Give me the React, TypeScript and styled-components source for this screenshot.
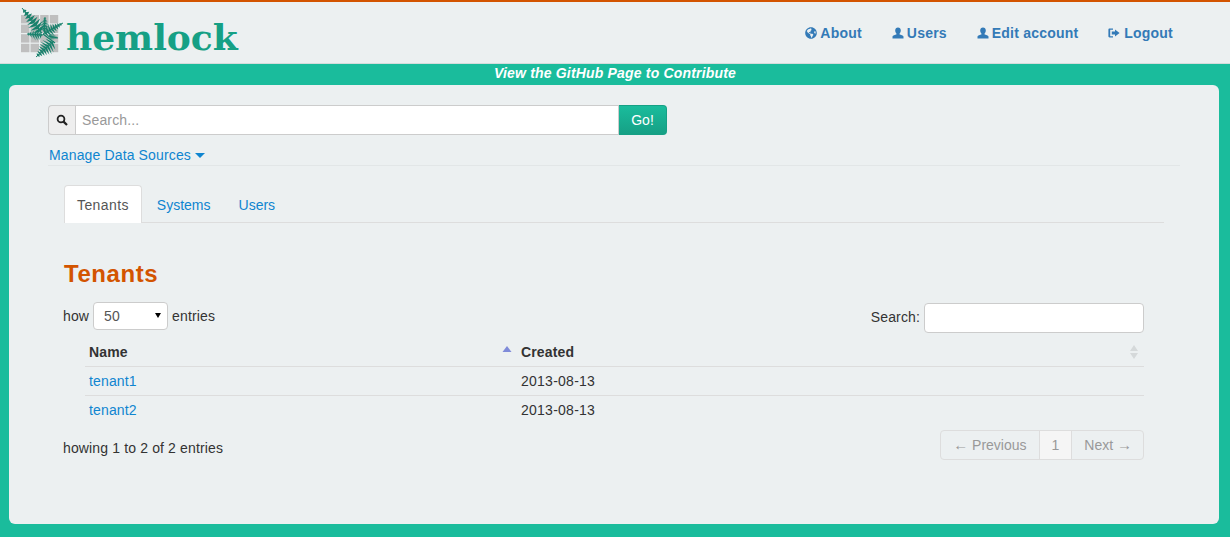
import React from "react";
import styled, { createGlobalStyle } from "styled-components";
import { FaGlobeAmericas } from "react-icons/fa";

const GlobalStyle = createGlobalStyle`
  html, body {
    margin: 0;
    padding: 0;
    background: #1abc9c;
    color: #333;
    font-family: "Liberation Sans", Arial, sans-serif;
    font-size: 14px;
    line-height: 20px;
    letter-spacing: 0.14px;
  }
  * {
    box-sizing: border-box;
  }
`;

const Page = styled.div`
  width: 1230px;
  height: 537px;
  overflow: hidden;
  display: flex;
  flex-direction: column;
`;

const Navbar = styled.header`
  height: 64px;
  flex: none;
  background: #ecf0f1;
  border-top: 2px solid #d35400;
  border-bottom: 1px solid #d4dcdc;
  display: flex;
  align-items: flex-start;
  justify-content: space-between;
  padding: 6px 57px 0 19px;
`;

const Brand = styled.a`
  display: flex;
  align-items: flex-start;
`;

const LogoText = styled.span`
  font-family: "DejaVu Serif", "Liberation Serif", serif;
  font-weight: 700;
  font-size: 36px;
  line-height: 48px;
  color: #16a085;
  margin: 5px 0 0 1px;
  letter-spacing: 0;
`;

const NavLinks = styled.nav`
  display: flex;
  gap: 30px;
  padding-top: 15px;
`;

const NavLink = styled.a`
  display: flex;
  align-items: center;
  gap: 3px;
  color: #337ab7;
  font-weight: 700;
  font-size: 14px;
  line-height: 20px;
  letter-spacing: 0.21px;
`;

const Banner = styled.div`
  height: 21px;
  flex: none;
  text-align: center;
  color: #fff;
  font-style: italic;
  font-weight: 700;
  font-size: 14px;
  line-height: 19px;
  letter-spacing: 0.18px;
`;

const Card = styled.main`
  height: 439px;
  flex: none;
  margin: 0 11px 0 9px;
  background: #ecf0f1;
  border-radius: 6px;
  padding: 20px 39px;
`;

const SearchGroup = styled.form`
  width: 619px;
  height: 30px;
  display: flex;
`;

const Addon = styled.span`
  width: 27px;
  display: flex;
  align-items: center;
  justify-content: center;
  background: #eee;
  border: 1px solid #ccc;
  border-right: 0;
  border-radius: 4px 0 0 4px;
`;

const SearchInput = styled.input`
  flex: 1;
  min-width: 0;
  border: 1px solid #ccc;
  background: #fff;
  padding: 0 6px;
  font: 14px "Liberation Sans", Arial, sans-serif;
  letter-spacing: 0.14px;
  color: #555;
  outline: 0;
  &::placeholder {
    color: #999;
    opacity: 1;
  }
`;

const GoButton = styled.button`
  width: 48px;
  border: 1px solid #16a085;
  border-left: 0;
  border-radius: 0 4px 4px 0;
  background: linear-gradient(#1abc9c, #16a085);
  color: #fff;
  padding: 0;
  font: 14px "Liberation Sans", Arial, sans-serif;
`;

const SourcesLink = styled.a`
  display: block;
  margin: 10px 0 0 1px;
  color: #0f85d0;
  font-size: 14px;
  line-height: 20px;
`;

const Caret = styled.i`
  display: inline-block;
  margin-left: 4px;
  vertical-align: 2px;
  border-top: 5px solid #0f85d0;
  border-left: 5px solid transparent;
  border-right: 5px solid transparent;
`;

const Rule = styled.hr`
  margin: 0;
  border: 0;
  border-top: 1px solid #e2e6e7;
`;

const Body = styled.section`
  padding: 19px 16px 0;
`;

const Tabs = styled.ul`
  list-style: none;
  margin: 0;
  padding: 0;
  height: 38px;
  display: flex;
  gap: 2px;
  border-bottom: 1px solid #ddd;
`;

const Tab = styled.li<{ $active?: boolean }>`
  height: 38px;
  padding: 9px 12px 0;
  border: 1px solid ${(p) => (p.$active ? "#ddd" : "transparent")};
  border-bottom: 0;
  border-radius: 4px 4px 0 0;
  background: ${(p) => (p.$active ? "#fff" : "transparent")};
  color: ${(p) => (p.$active ? "#555" : "#0f85d0")};
  letter-spacing: ${(p) => (p.$active ? "0.4px" : "0")};
`;

const Title = styled.h3`
  margin: 37px 0 0;
  color: #d35400;
  font-size: 24px;
  line-height: 28px;
  font-weight: 700;
  letter-spacing: 0.55px;
`;

const Controls = styled.div`
  display: flex;
  justify-content: space-between;
  align-items: flex-start;
  margin: 15px 20px 0 -1px;
`;

const Label = styled.label`
  display: flex;
  align-items: center;
  gap: 4px;
  height: 26px;
`;

const SelectBox = styled.span`
  position: relative;
  display: block;
  height: 28px;
  &::after {
    content: "";
    position: absolute;
    top: 11px;
    right: 7px;
    border-top: 5px solid #000;
    border-left: 3px solid transparent;
    border-right: 3px solid transparent;
  }
`;

const SizeSelect = styled.select`
  display: block;
  width: 75px;
  height: 28px;
  padding: 0 10px;
  border: 1px solid #ccc;
  border-radius: 4px;
  background: #fff;
  color: #555;
  font: 14px "Liberation Sans", Arial, sans-serif;
  appearance: none;
`;

const FilterLabel = styled(Label)`
  height: 30px;
  align-items: flex-start;
  line-height: 28px;
`;

const FilterInput = styled.input`
  width: 220px;
  height: 30px;
  border: 1px solid #ccc;
  border-radius: 4px;
  background: #fff;
`;

const Table = styled.table`
  width: 1059px;
  margin: 7px 0 0 21px;
  border-collapse: collapse;
  table-layout: fixed;
`;

const HeadCell = styled.th<{ $width?: number }>`
  width: ${(p) => (p.$width ? `${p.$width}px` : "auto")};
  height: 26px;
  padding: 0 4px 2px;
  text-align: left;
  font-weight: 700;
  border-bottom: 1px solid #ddd;
`;

const HeadInner = styled.div`
  display: flex;
  align-items: center;
  justify-content: space-between;
`;

const Cell = styled.td`
  height: 29px;
  padding: 0 4px;
  border-bottom: 1px solid #ddd;
`;

const LastCell = styled(Cell)`
  border-bottom: 0;
`;

const DateCell = styled(Cell)`
  letter-spacing: 0.25px;
`;

const LastDateCell = styled(DateCell)`
  border-bottom: 0;
`;

const TenantLink = styled.a`
  color: #0f85d0;
`;

const Footer = styled.div`
  display: flex;
  justify-content: space-between;
  align-items: flex-start;
  margin: 6px 20px 0 -1px;
`;

const Info = styled.div`
  padding-top: 8px;
`;

const Pager = styled.ul`
  list-style: none;
  margin: 0;
  padding: 0;
  height: 30px;
  display: flex;
  border: 1px solid #ddd;
  border-radius: 4px;
  color: #999;
  letter-spacing: 0;
`;

const PageItem = styled.li<{ $current?: boolean }>`
  padding: 4px 12px;
  background: ${(p) => (p.$current ? "#f5f5f5" : "transparent")};
  border-left: ${(p) => (p.$current ? "1px solid #ddd" : "0")};
  border-right: ${(p) => (p.$current ? "1px solid #ddd" : "0")};
  &:last-child {
    padding-right: 11px;
  }
`;

const Arrow = styled.span`
  font-size: 15px;
  line-height: 20px;
`;

const SortSvg = styled.svg`
  flex: none;
  margin-right: 1px;
`;

const GRID = [0, 1, 2, 3];
const STEPS = [0.06, 0.17, 0.28, 0.39, 0.5, 0.61, 0.72, 0.83];
const FERN = "#17806b";

// one pinnate leaf: stalk plus pointed leaflets that shrink towards the tip
const Frond = ({ x1, y1, x2, y2, size }: { x1: number; y1: number; x2: number; y2: number; size: number }) => {
  const dx = x2 - x1;
  const dy = y2 - y1;
  const length = Math.hypot(dx, dy);
  const ux = dx / length;
  const uy = dy / length;
  const base = length * 0.11;
  const points = STEPS.flatMap((t) => {
    const sx = x1 + dx * t;
    const sy = y1 + dy * t;
    const reach = size * Math.min(1, (t + 0.35) / 0.6) * (1.05 - t);
    return [-1, 1].map((side) => {
      const tipX = sx + ux * reach * 0.45 - side * uy * reach;
      const tipY = sy + uy * reach * 0.45 + side * ux * reach;
      return `${sx},${sy} ${sx + ux * base},${sy + uy * base} ${tipX},${tipY}`;
    });
  });
  return (
    <g fill={FERN}>
      <line x1={x1} y1={y1} x2={x2} y2={y2} stroke={FERN} strokeWidth="1" />
      {points.map((p) => (
        <polygon key={p} points={p} />
      ))}
    </g>
  );
};

const Logo = () => (
  <svg width="46" height="52" viewBox="0 0 46 52" aria-hidden="true">
    {GRID.map((row) =>
      GRID.map((col) => (
        <rect key={`${row}-${col}`} x={2 + col * 9.6} y={7 + row * 9.6} width="8.4" height="8.4" fill="#bfbfbf" />
      ))
    )}
    <Frond x1={23} y1={25} x2={3} y2={0} size={10} />
    <Frond x1={24} y1={26} x2={44} y2={15} size={8} />
    <Frond x1={24} y1={27} x2={8} y2={26} size={8} />
    <Frond x1={25} y1={24} x2={26} y2={9} size={7} />
    <Frond x1={35} y1={33} x2={17} y2={49} size={11} />
    <Frond x1={29} y1={28} x2={39} y2={30} size={5} />
    <line x1="24" y1="26" x2="36" y2="35" stroke={FERN} strokeWidth="1.2" />
  </svg>
);

const UserIcon = () => (
  <svg width="12" height="12" viewBox="0 0 12 12" fill="#337ab7" aria-hidden="true">
    <path d="M6 .6c1.7 0 2.8 1.2 2.8 3 0 1.2-.5 2.3-1.2 2.9v.9c1.2.4 3.700 1 3.900 2V11.400H.5V9.400c.2-1 2.700-1.600 3.900-2v-.9C3.700 5.900 3.200 4.800 3.200 3.600 3.200 1.800 4.300.6 6 .6z" />
  </svg>
);

const LogoutIcon = () => (
  <svg width="13" height="12" viewBox="0 0 13 12" fill="#337ab7" aria-hidden="true">
    <path d="M1.600 1.500H5v1.200H2.200v6.600H5v1.200H1.600C.8 10.500.4 10 .4 9.300V2.700C.4 2 .8 1.500 1.600 1.500z" />
    <path d="M7 2.600 11.600 6 7 9.400V7.600H3.800V4.400H7z" />
  </svg>
);

const SearchIcon = () => (
  <svg width="12" height="12" viewBox="0 0 12 12" aria-hidden="true">
    <circle cx="5" cy="5" r="3.400" fill="none" stroke="#222" strokeWidth="1.800" />
    <line x1="7.600" y1="7.600" x2="11" y2="11" stroke="#222" strokeWidth="2.200" />
  </svg>
);

const SortAsc = () => (
  <SortSvg width="10" height="14" viewBox="0 0 10 14" aria-hidden="true">
    <path d="M5 1 9.500 7H.5z" fill="#7f8bd9" />
  </SortSvg>
);

const SortBoth = () => (
  <SortSvg width="10" height="14" viewBox="0 0 10 14" aria-hidden="true">
    <path d="M5 0 9 6H1zM5 14 1 8h8z" fill="#d5d9da" />
  </SortSvg>
);

const App: React.FC = () => {
  return (
    <Page>
      <GlobalStyle />
      <Navbar>
        <Brand>
          <Logo />
          <LogoText>hemlock</LogoText>
        </Brand>
        <NavLinks>
          <NavLink><FaGlobeAmericas size={12} />About</NavLink>
          <NavLink><UserIcon />Users</NavLink>
          <NavLink><UserIcon />Edit account</NavLink>
          <NavLink><LogoutIcon />Logout</NavLink>
        </NavLinks>
      </Navbar>
      <Banner>View the GitHub Page to Contribute</Banner>
      <Card>
        <SearchGroup>
          <Addon><SearchIcon /></Addon>
          <SearchInput placeholder="Search..." />
          <GoButton type="button">Go!</GoButton>
        </SearchGroup>
        <SourcesLink>Manage Data Sources<Caret /></SourcesLink>
        <Rule />
        <Body>
          <Tabs>
            <Tab $active>Tenants</Tab>
            <Tab>Systems</Tab>
            <Tab>Users</Tab>
          </Tabs>
          <Title>Tenants</Title>
          <Controls>
            <Label>
              how
              <SelectBox>
                <SizeSelect defaultValue="50">
                  <option>10</option>
                  <option>25</option>
                  <option>50</option>
                  <option>100</option>
                </SizeSelect>
              </SelectBox>
              entries
            </Label>
            <FilterLabel>
              Search:
              <FilterInput />
            </FilterLabel>
          </Controls>
          <Table>
            <thead>
              <tr>
                <HeadCell $width={432}>
                  <HeadInner>Name<SortAsc /></HeadInner>
                </HeadCell>
                <HeadCell>
                  <HeadInner>Created<SortBoth /></HeadInner>
                </HeadCell>
              </tr>
            </thead>
            <tbody>
              <tr>
                <Cell><TenantLink>tenant1</TenantLink></Cell>
                <DateCell>2013-08-13</DateCell>
              </tr>
              <tr>
                <LastCell><TenantLink>tenant2</TenantLink></LastCell>
                <LastDateCell>2013-08-13</LastDateCell>
              </tr>
            </tbody>
          </Table>
          <Footer>
            <Info>howing 1 to 2 of 2 entries</Info>
            <Pager>
              <PageItem><Arrow>←</Arrow> Previous</PageItem>
              <PageItem $current>1</PageItem>
              <PageItem>Next <Arrow>→</Arrow></PageItem>
            </Pager>
          </Footer>
        </Body>
      </Card>
    </Page>
  );
};

export default App;
